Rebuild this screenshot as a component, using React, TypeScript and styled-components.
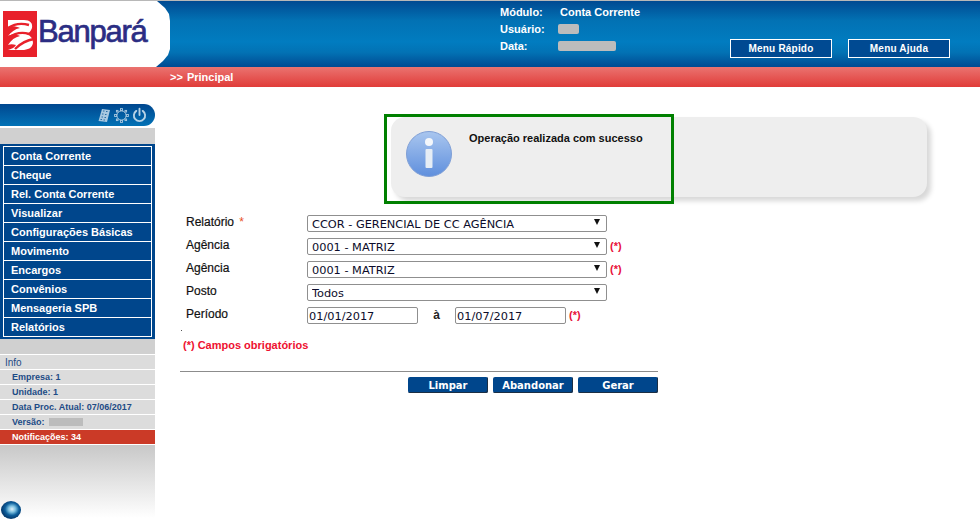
import React from "react";
import styled, { createGlobalStyle } from "styled-components";

const Global = createGlobalStyle`
  html, body { margin: 0; padding: 0; background: #fff; }
  body { font-family: "Liberation Sans", Arial, sans-serif; width: 980px; height: 526px; overflow: hidden; }
`;

const Page = styled.div`
  width: 980px;
  height: 526px;
  display: flex;
  flex-direction: column;
`;

const Header = styled.header`
  height: 66px;
  border-top: 1px solid #b8b8b8;
  background: linear-gradient(180deg, #004a92 0%, #0272b4 30%, #017cc0 62%, #0272b4 78%, #004a92 100%);
  display: flex;
  flex: none;
`;

const LogoArea = styled.div`
  width: 170px;
  height: 66px;
  background: #fff;
  clip-path: polygon(0 0, 157px 0, 165px 7px, 169px 13px, 170px 20px, 170px 48px, 168px 54px, 163px 60px, 156px 66px, 0 66px);
  display: flex;
  align-items: flex-start;
  gap: 1px;
  padding: 10px 0 0 3px;
  box-sizing: border-box;
`;

const LogoWord = styled.span`
  color: #2b2d83;
  font-size: 31px;
  letter-spacing: -1.25px;
  line-height: 36px;
  margin-top: 3px;
  -webkit-text-stroke: 0.7px #2b2d83;
`;

const HeaderInfo = styled.div`
  margin-left: 330px;
  padding-top: 3px;
  display: grid;
  grid-template-columns: 58px auto;
  grid-auto-rows: 17px;
  align-content: start;
  width: 220px;
  flex: none;
`;

const HeaderLabel = styled.span`
  color: #fff;
  font-size: 11px;
  font-weight: bold;
  line-height: 17px;
`;

const HeaderValue = styled.span`
  color: #fff;
  font-size: 11px;
  font-weight: bold;
  line-height: 17px;
  margin-left: 2px;
`;

const Masked = styled.span<{ $w: number }>`
  display: block;
  width: ${(p) => p.$w}px;
  height: 10px;
  margin-top: 3px;
  background: #bcbcbc;
  border-radius: 2px;
`;

const HeaderButtons = styled.div`
  display: flex;
  gap: 16px;
  margin-left: 10px;
  padding-top: 38px;
`;

const HeaderButton = styled.div`
  width: 102px;
  height: 19px;
  box-sizing: border-box;
  border: 1px solid #fff;
  background: #004a92;
  color: #fff;
  font-size: 10px;
  font-weight: bold;
  line-height: 18px;
  letter-spacing: 0.2px;
  text-align: center;
`;

const Crumb = styled.div`
  height: 20px;
  flex: none;
  background: linear-gradient(180deg, #ea7370 0%, #e03c39 100%);
  color: #fff;
  font-size: 11px;
  font-weight: bold;
  line-height: 21px;
  padding-left: 170px;
  word-spacing: 1px;
`;

const Body = styled.div`
  flex: 1;
  display: flex;
  min-height: 0;
`;

const Side = styled.aside`
  width: 155px;
  flex: none;
  padding-top: 17px;
  display: flex;
  flex-direction: column;
`;

const PowerBar = styled.div`
  height: 22px;
  flex: none;
  background: linear-gradient(180deg, #00478f 0%, #0272b6 100%);
  border-radius: 0 11px 11px 0;
  display: flex;
  justify-content: flex-end;
  align-items: center;
  gap: 3px;
  padding-right: 8px;
`;

const GreyBand = styled.div<{ $top: number; $h: number }>`
  height: ${(p) => p.$h}px;
  flex: none;
  margin-top: ${(p) => p.$top}px;
  background: #d0d0d0;
`;

const Menu = styled.nav`
  height: 195px;
  flex: none;
  box-sizing: border-box;
  background: #00468c;
  padding: 2px 3px 0;
`;

const MenuItem = styled.div`
  height: 19px;
  box-sizing: border-box;
  border: 1px solid #fff;
  border-bottom: 0;
  color: #fff;
  font-size: 11px;
  font-weight: bold;
  line-height: 18px;
  padding-left: 7px;
  &:last-child { height: 20px; border-bottom: 1px solid #fff; }
`;

const InfoList = styled.div`
  display: flex;
  flex-direction: column;
  flex: none;
`;

const InfoRow = styled.div<{ $alert?: boolean; $head?: boolean }>`
  height: 15px;
  box-sizing: border-box;
  border-top: 1px solid #fff;
  background: ${(p) => (p.$alert ? "#cb3a27" : "#dcdcdc")};
  color: ${(p) => (p.$alert ? "#fff" : "#1d4b86")};
  font-size: ${(p) => (p.$head ? 10 : 9)}px;
  font-weight: ${(p) => (p.$head ? "normal" : "bold")};
  padding-left: ${(p) => (p.$head ? 5 : 12)}px;
  display: flex;
  align-items: center;
  white-space: pre;
`;

const VersionMask = styled.span`
  display: block;
  width: 34px;
  height: 8px;
  background: #bcbcbc;
  margin-left: 2px;
`;

const SideFoot = styled.div`
  height: 73px;
  flex: none;
  border-top: 1px solid #fff;
  background: linear-gradient(180deg, #c8c8c8 0%, #fff 100%);
  position: relative;
`;

const Orb = styled.div`
  position: absolute;
  left: 1px;
  top: 56px;
  width: 20px;
  height: 18px;
  border-radius: 50%;
  background: radial-gradient(ellipse 10px 9px at 55% 45%, #e0f1fa 0%, #7cc0e0 35%, #0d5f9c 70%, #073f74 100%);
`;

const Main = styled.main`
  flex: 1;
  padding: 30px 0 0 25px;
  display: flex;
  flex-direction: column;
`;

const NoticeWrap = styled.div`
  position: relative;
  margin-left: 211px;
  width: 536px;
  height: 80px;
  flex: none;
`;

const Notice = styled.div`
  height: 80px;
  box-sizing: border-box;
  background: #eeeeee;
  border-radius: 14px;
  box-shadow: 4px 4px 5px #d8d8d8;
  display: flex;
  padding: 14px 0 0 15px;
  gap: 17px;
`;

const NoticeText = styled.span`
  font-size: 11px;
  font-weight: bold;
  color: #111;
  line-height: 16px;
  margin-top: -1px;
`;

const NoticeFrame = styled.div`
  position: absolute;
  left: -7px;
  top: -3px;
  width: 290px;
  height: 90px;
  box-sizing: border-box;
  border: 3px solid #008000;
`;

const Form = styled.form`
  margin-top: 18px;
  margin-left: 6px;
  display: flex;
  flex-direction: column;
  gap: 6px;
`;

const Row = styled.div`
  display: flex;
  align-items: flex-start;
  height: 17px;
`;

const Label = styled.label`
  width: 121px;
  flex: none;
  font-size: 12px;
  color: #111;
  line-height: 14px;
  font-weight: normal;
  -webkit-text-stroke: 0.2px #111;
`;

const Star = styled.span`
  color: #e8501e;
  margin-left: 2px;
  -webkit-text-stroke: 0;
`;

const SelectWrap = styled.div`
  position: relative;
  width: 300px;
  height: 17px;
  flex: none;
`;

const Select = styled.select`
  appearance: none;
  display: block;
  width: 300px;
  height: 17px;
  box-sizing: border-box;
  border: 1px solid #8f8f8f;
  border-radius: 2px;
  background: #fff;
  color: #0c0c2a;
  padding: 1px 0 0 4px;
  font-family: "DejaVu Sans", Verdana, sans-serif;
  font-size: 11.33px;
  line-height: 15px;
  margin: 0;
`;

const Arrow = styled.span`
  position: absolute;
  right: 7px;
  top: 4px;
  width: 0;
  height: 0;
  border-left: 3.5px solid transparent;
  border-right: 3.5px solid transparent;
  border-top: 6px solid #111;
  pointer-events: none;
`;

const Required = styled.span`
  color: #e8103a;
  font-size: 11px;
  font-weight: bold;
  line-height: 17px;
  margin-left: 3px;
`;

const DateInput = styled.input`
  width: 111px;
  height: 17px;
  box-sizing: border-box;
  border: 1px solid #8f8f8f;
  border-radius: 2px;
  padding: 0 0 0 1px;
  margin: 0;
  color: #0c0c2a;
  background: #fff;
  font-family: "DejaVu Sans", Verdana, sans-serif;
  font-size: 11.33px;
  flex: none;
`;

const Until = styled.span`
  width: 37px;
  flex: none;
  text-align: center;
  font-size: 12px;
  font-weight: bold;
  color: #222;
  line-height: 16px;
`;

const Mandatory = styled.div`
  margin: 14px 0 0 3px;
  color: #ee1030;
  font-size: 11px;
  font-weight: bold;
  line-height: 14px;
  position: relative;
  &::before {
    content: "";
    position: absolute;
    left: -2px;
    top: -8px;
    width: 1px;
    height: 1px;
    background: #555;
  }
`;

const Actions = styled.div`
  width: 478px;
  margin-top: 19px;
  border-top: 1px solid #8c8c8c;
  padding-top: 5px;
  display: flex;
  justify-content: flex-end;
  gap: 5px;
`;

const ActionButton = styled.button`
  width: 80px;
  height: 16px;
  padding: 1px 0 0;
  border: 0;
  border-radius: 2px;
  background: #00468c;
  box-shadow: inset -1px -1px 0 #1c2f44;
  color: #fff;
  font-family: "DejaVu Sans", Verdana, sans-serif;
  font-size: 10px;
  font-weight: bold;
  line-height: 15px;
`;

const menu = ["Conta Corrente", "Cheque", "Rel. Conta Corrente", "Visualizar", "Configurações Básicas", "Movimento", "Encargos", "Convênios", "Mensageria SPB", "Relatórios"];

const LogoMark = () => (
  <svg width="34" height="46" viewBox="0 0 34 46">
    <rect width="34" height="46" fill="#e8212b" />
    <path d="M5 9 H21 C27 9 30 12 29 17 C28 20 26 22 24 23 C28 25 30 28 30 32 C29 37 25 39 19 39 H5 C9 38 12 36 13 34 C10 33 7 33 5 34 C8 29 12 26 17 25 C13 23 8 23 5 25 C8 21 12 18 17 17 C13 15 8 15 5 16 Z" fill="#fff" />
    <path d="M5 17 C11 13 19 12 26 14 M5 27 C12 22 20 21 26 23 M12 38 C18 32 24 29 31 28" fill="none" stroke="#e8212b" strokeWidth="2.4" />
  </svg>
);

const Icons = () => (
  <>
    <svg width="14" height="15" viewBox="0 0 14 15">
      <path d="M5 1 L13 2 L10 14 L1.5 13Z" fill="#a8c8e0" />
      <path d="M6 3h1.5M9 3.5h1.5M5 6h1.5M8 6.5h1.5M4.5 9h1.5M7.5 9.5h1.5M3.5 11.5h1.5M6.5 12h1.5" stroke="#2a6ea6" strokeWidth="1.1" />
    </svg>
    <svg width="15" height="15" viewBox="0 0 15 15" fill="none" stroke="#a8c8e0">
      <circle cx="7.5" cy="7.5" r="4.6" />
      <g fill="#0a5c9e" strokeWidth="0.9">
        <rect x="6.5" y="0.6" width="2" height="2" />
        <rect x="6.5" y="12.4" width="2" height="2" />
        <rect x="0.6" y="6.5" width="2" height="2" />
        <rect x="12.4" y="6.5" width="2" height="2" />
        <rect x="2.4" y="2.4" width="1.6" height="1.6" />
        <rect x="11" y="2.4" width="1.6" height="1.6" />
        <rect x="2.4" y="11" width="1.6" height="1.6" />
        <rect x="11" y="11" width="1.6" height="1.6" />
      </g>
    </svg>
    <svg width="15" height="16" viewBox="0 0 16 16" fill="none" stroke="#b6d2e6" strokeWidth="2" strokeLinecap="round">
      <path d="M4.6 3.6 A6 6 0 1 0 11.4 3.6" />
      <path d="M8 1.2 V8" />
    </svg>
  </>
);

const InfoIcon = () => (
  <svg width="46" height="46" viewBox="0 0 46 46">
    <defs>
      <linearGradient id="ig" x1="0" y1="0" x2="0" y2="1">
        <stop offset="0" stopColor="#a9c6ef" />
        <stop offset="1" stopColor="#5f8fdd" />
      </linearGradient>
    </defs>
    <circle cx="23" cy="23" r="22.5" fill="url(#ig)" stroke="#7f9fd6" />
    <circle cx="23" cy="11" r="4" fill="#f4f7fb" />
    <rect x="19.5" y="18" width="7" height="19" rx="1" fill="#e6edf5" />
  </svg>
);

export default function App() {
  return (
    <Page>
      <Global />
      <Header>
        <LogoArea>
          <LogoMark />
          <LogoWord>Banpará</LogoWord>
        </LogoArea>
        <HeaderInfo>
          <HeaderLabel>Módulo:</HeaderLabel>
          <HeaderValue>Conta Corrente</HeaderValue>
          <HeaderLabel>Usuário:</HeaderLabel>
          <Masked $w={21} />
          <HeaderLabel>Data:</HeaderLabel>
          <Masked $w={58} />
        </HeaderInfo>
        <HeaderButtons>
          <HeaderButton>Menu Rápido</HeaderButton>
          <HeaderButton>Menu Ajuda</HeaderButton>
        </HeaderButtons>
      </Header>
      <Crumb>&gt;&gt; Principal</Crumb>
      <Body>
        <Side>
          <PowerBar><Icons /></PowerBar>
          <GreyBand $top={2} $h={16} />
          <Menu>
            {menu.map((m) => <MenuItem key={m}>{m}</MenuItem>)}
          </Menu>
          <GreyBand $top={0} $h={15} />
          <InfoList>
            <InfoRow $head>Info</InfoRow>
            <InfoRow>Empresa: 1</InfoRow>
            <InfoRow>Unidade: 1</InfoRow>
            <InfoRow>Data Proc. Atual: 07/06/2017</InfoRow>
            <InfoRow>Versão: <VersionMask /></InfoRow>
            <InfoRow $alert>Notificações: 34</InfoRow>
          </InfoList>
          <SideFoot><Orb /></SideFoot>
        </Side>
        <Main>
          <NoticeWrap>
            <Notice>
              <InfoIcon />
              <NoticeText>Operação realizada com sucesso</NoticeText>
            </Notice>
            <NoticeFrame />
          </NoticeWrap>
          <Form>
            <Row>
              <Label>Relatório <Star>*</Star></Label>
              <SelectWrap>
                <Select defaultValue="a"><option value="a">CCOR - GERENCIAL DE CC AGÊNCIA</option></Select>
                <Arrow />
              </SelectWrap>
            </Row>
            <Row>
              <Label>Agência</Label>
              <SelectWrap>
                <Select defaultValue="a"><option value="a">0001 - MATRIZ</option></Select>
                <Arrow />
              </SelectWrap>
              <Required>(*)</Required>
            </Row>
            <Row>
              <Label>Agência</Label>
              <SelectWrap>
                <Select defaultValue="a"><option value="a">0001 - MATRIZ</option></Select>
                <Arrow />
              </SelectWrap>
              <Required>(*)</Required>
            </Row>
            <Row>
              <Label>Posto</Label>
              <SelectWrap>
                <Select defaultValue="a"><option value="a">Todos</option></Select>
                <Arrow />
              </SelectWrap>
            </Row>
            <Row>
              <Label>Período</Label>
              <DateInput defaultValue="01/01/2017" />
              <Until>à</Until>
              <DateInput defaultValue="01/07/2017" />
              <Required>(*)</Required>
            </Row>
          </Form>
          <Mandatory>(*) Campos obrigatórios</Mandatory>
          <Actions>
            <ActionButton type="button">Limpar</ActionButton>
            <ActionButton type="button">Abandonar</ActionButton>
            <ActionButton type="button">Gerar</ActionButton>
          </Actions>
        </Main>
      </Body>
    </Page>
  );
}
